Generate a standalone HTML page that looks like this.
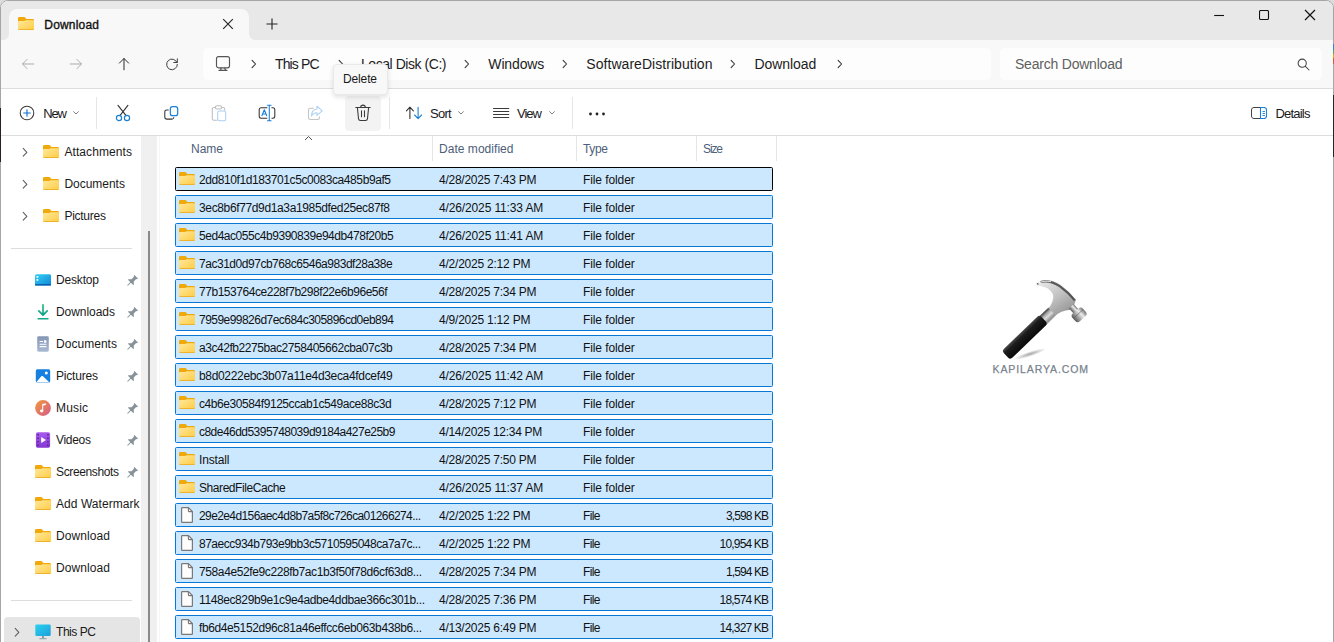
<!DOCTYPE html>
<html lang="en"><head><meta charset="utf-8"><title>Download</title>
<style>
html,body{margin:0;padding:0;}
body{width:1334px;height:642px;overflow:hidden;background:#fff;position:relative;font-family:"Liberation Sans",sans-serif;}
.a{position:absolute;display:block;}
.t{position:absolute;white-space:nowrap;line-height:1;}
#w{position:absolute;left:0;top:0;width:1334px;height:642px;overflow:hidden;}
</style></head><body><div id="w">
<div class="a" style="left:0px;top:0px;width:1334px;height:642px;background:#dcdcdc;"></div>
<div class="a" style="left:0px;top:0px;width:1334px;height:660px;background:#fff;border:1px solid #a6a6a6;border-radius:8px 8px 0 0;box-sizing:border-box;"></div>
<div class="a" style="left:1px;top:1px;width:1332px;height:39px;background:#e8e8e8;border-radius:7px 7px 0 0;"></div>
<div class="a" style="left:1px;top:40px;width:1332px;height:48px;background:#f8f8f8;"></div>
<div class="a" style="left:1px;top:88px;width:1332px;height:1px;background:#dddddd;"></div>
<div class="a" style="left:9px;top:9px;width:240px;height:31px;background:#f8f8f8;border-radius:8px 8px 0 0;"></div>
<svg class="a" style="left:3px;top:34px;" width="6" height="6" viewBox="0 0 6 6"><path d="M6 0 V6 H0 A6 6 0 0 0 6 0Z" fill="#f8f8f8"/></svg>
<svg class="a" style="left:249px;top:34px;" width="6" height="6" viewBox="0 0 6 6"><path d="M0 0 V6 H6 A6 6 0 0 1 0 0Z" fill="#f8f8f8"/></svg>
<div class="a" style="left:1333px;top:44px;width:1px;height:6px;background:#2f86d6;"></div>
<div class="a" style="left:1333px;top:50px;width:1px;height:4px;background:#4aa86a;"></div>
<div class="a" style="left:1333px;top:54px;width:1px;height:4px;background:#c9b21a;"></div>
<div class="a" style="left:1333px;top:58px;width:1px;height:6px;background:#cf5a45;"></div>
<div class="a" style="left:1333px;top:95px;width:1px;height:62px;background:#2a2424;"></div>
<div class="a" style="left:0px;top:108px;width:1px;height:54px;background:#2a2020;"></div>
<svg class="a" style="left:18px;top:17px;" width="16" height="13" viewBox="0 0 16 13"><defs><linearGradient id="fg1" x1="0" y1="0" x2="1" y2="1"><stop offset="0" stop-color="#ffe79c"/><stop offset="1" stop-color="#ffcd45"/></linearGradient></defs>
<path d="M1.300 0H6C6.600 0 7 .2 7.400 .7L8.300 2H14.700C15.400 2 16 2.600 16 3.300V6H0V1.300C0 .6 .6 0 1.300 0Z" fill="#f0a90a"/>
<path d="M0 4.900C0 4.400 .4 4 .9 4H6.200C6.700 4 7 3.900 7.300 3.600L7.500 3.400C7.700 3.250 7.900 3.200 8.200 3.200H15C15.600 3.200 16 3.600 16 4.200V11.800C16 12.500 15.500 13 14.800 13H1.200C.5 13 0 12.500 0 11.800Z" fill="url(#fg1)"/>
<path d="M0 11.500V11.800C0 12.500 .5 13 1.200 13H14.800C15.500 13 16 12.500 16 11.800V11.500C16 12 15.500 12.300 14.800 12.300H1.200C.5 12.300 0 12 0 11.500Z" fill="#eaa81c"/></svg>
<span class="t" style="top:18.84px;font-size:12px;letter-spacing:0.190px;color:#111;-webkit-text-stroke:0.35px #111;left:44.30px;">Download</span>
<svg class="a" style="left:222px;top:18px;" width="12" height="12" viewBox="0 0 12 12"><path d="M1.2 1.2 L10.800 10.800 M10.800 1.2 L1.2 10.800" stroke="#222" stroke-width="1.1" fill="none"/></svg>
<svg class="a" style="left:265.5px;top:18px;" width="12" height="12" viewBox="0 0 12 12"><path d="M6 .5V11.500M.5 6H11.500" stroke="#222" stroke-width="1.1" fill="none"/></svg>
<svg class="a" style="left:1213px;top:10px;" width="12" height="12" viewBox="0 0 12 12"><path d="M1.200 5.500H11" stroke="#111" stroke-width="1.100"/></svg>
<svg class="a" style="left:1259px;top:10px;" width="12" height="12" viewBox="0 0 12 12"><rect x=".5" y=".5" width="9" height="9" rx="1.300" fill="none" stroke="#111" stroke-width="1.100"/></svg>
<svg class="a" style="left:1304px;top:9px;" width="12" height="12" viewBox="0 0 12 12"><path d="M1 1L11 11M11 1L1 11" stroke="#111" stroke-width="1.2" fill="none"/></svg>
<svg class="a" style="left:20px;top:55.5px;" width="16" height="16" viewBox="0 0 16 16"><g transform="rotate(0 8 8) translate(8 8) scale(.89) translate(-8 -8)"><path d="M14.500 8H2M7 2.800L1.800 8L7 13.200" stroke="#a6a6a6" stroke-width="1.050" fill="none" stroke-linecap="round" stroke-linejoin="round"/></g></svg>
<svg class="a" style="left:68px;top:55.5px;" width="16" height="16" viewBox="0 0 16 16"><g transform="rotate(180 8 8) translate(8 8) scale(.89) translate(-8 -8)"><path d="M14.500 8H2M7 2.800L1.800 8L7 13.200" stroke="#a6a6a6" stroke-width="1.050" fill="none" stroke-linecap="round" stroke-linejoin="round"/></g></svg>
<svg class="a" style="left:115.5px;top:55.7px;" width="16" height="16" viewBox="0 0 16 16"><g transform="rotate(90 8 8) translate(8 8) scale(.89) translate(-8 -8)"><path d="M14.500 8H2M7 2.800L1.800 8L7 13.200" stroke="#1f1f1f" stroke-width="1.050" fill="none" stroke-linecap="round" stroke-linejoin="round"/></g></svg>
<svg class="a" style="left:164px;top:55.7px;" width="16" height="16" viewBox="0 0 16 16"><g transform="translate(8 8) scale(.89) translate(-8 -8)"><path d="M13.600 6.300A6 6 0 1 0 14 8.500" stroke="#333" stroke-width="1.050" fill="none" stroke-linecap="round"/><path d="M14 2.200V6.300H9.900" stroke="#333" stroke-width="1.050" fill="none" stroke-linecap="round" stroke-linejoin="round"/></g></svg>
<div class="a" style="left:203px;top:48px;width:788px;height:32px;background:#fdfdfd;border-radius:5px;"></div>
<div class="a" style="left:1000px;top:48px;width:322px;height:32px;background:#fdfdfd;border-radius:5px;"></div>
<svg class="a" style="left:215px;top:56px;" width="16" height="16" viewBox="0 0 16 16"><rect x="1.500" y=".6" width="13" height="11.200" rx="2" fill="none" stroke="#555" stroke-width="1.150"/><path d="M6.200 12L5.600 14.200M9.800 12L10.400 14.200M4 14.300H12" stroke="#555" stroke-width="1.200" fill="none" stroke-linecap="round"/></svg>
<svg class="a" style="left:249.5px;top:58.1px;" width="8" height="12" viewBox="0 0 8 12"><path d="M2.100 2.300L5.600 6L2.100 9.700" stroke="#333" stroke-width="1.050" fill="none" stroke-linecap="round" stroke-linejoin="round"/></svg>
<svg class="a" style="left:337px;top:58.1px;" width="8" height="12" viewBox="0 0 8 12"><path d="M2.100 2.300L5.600 6L2.100 9.700" stroke="#333" stroke-width="1.050" fill="none" stroke-linecap="round" stroke-linejoin="round"/></svg>
<svg class="a" style="left:463px;top:58.1px;" width="8" height="12" viewBox="0 0 8 12"><path d="M2.100 2.300L5.600 6L2.100 9.700" stroke="#333" stroke-width="1.050" fill="none" stroke-linecap="round" stroke-linejoin="round"/></svg>
<svg class="a" style="left:561px;top:58.1px;" width="8" height="12" viewBox="0 0 8 12"><path d="M2.100 2.300L5.600 6L2.100 9.700" stroke="#333" stroke-width="1.050" fill="none" stroke-linecap="round" stroke-linejoin="round"/></svg>
<svg class="a" style="left:729px;top:58.1px;" width="8" height="12" viewBox="0 0 8 12"><path d="M2.100 2.300L5.600 6L2.100 9.700" stroke="#333" stroke-width="1.050" fill="none" stroke-linecap="round" stroke-linejoin="round"/></svg>
<svg class="a" style="left:835.5px;top:58.1px;" width="8" height="12" viewBox="0 0 8 12"><path d="M2.100 2.300L5.600 6L2.100 9.700" stroke="#333" stroke-width="1.050" fill="none" stroke-linecap="round" stroke-linejoin="round"/></svg>
<span class="t" style="top:57.15px;font-size:14px;letter-spacing:-0.881px;color:#1c1c1c;left:275.00px;">This PC</span>
<span class="t" style="top:57.15px;font-size:14px;letter-spacing:-0.450px;color:#1c1c1c;left:361.00px;">Local Disk (C:)</span>
<span class="t" style="top:57.15px;font-size:14px;letter-spacing:-0.132px;color:#1c1c1c;left:488.30px;">Windows</span>
<span class="t" style="top:57.15px;font-size:14px;letter-spacing:0.048px;color:#1c1c1c;left:586.30px;">SoftwareDistribution</span>
<span class="t" style="top:57.15px;font-size:14px;letter-spacing:-0.066px;color:#1c1c1c;left:754.50px;">Download</span>
<span class="t" style="top:57.15px;font-size:14px;letter-spacing:-0.215px;color:#5f5f5f;left:1015.00px;">Search Download</span>
<svg class="a" style="left:1297px;top:58px;" width="13" height="13" viewBox="0 0 13 13"><circle cx="5.200" cy="5.200" r="4.100" fill="none" stroke="#444" stroke-width="1.050"/><path d="M8.200 8.200L12 12" stroke="#444" stroke-width="1.050" stroke-linecap="round"/></svg>
<div class="a" style="left:1px;top:135px;width:1332px;height:1px;background:#dcdcdc;"></div>
<div class="a" style="left:96px;top:97px;width:1px;height:32px;background:#e6e6e6;"></div>
<div class="a" style="left:389px;top:97px;width:1px;height:32px;background:#e6e6e6;"></div>
<div class="a" style="left:572px;top:97px;width:1px;height:32px;background:#e6e6e6;"></div>
<svg class="a" style="left:18.5px;top:104.5px;" width="16" height="16" viewBox="0 0 16 16"><circle cx="8" cy="8" r="6.800" fill="none" stroke="#3a3a3a" stroke-width="1.050"/><path d="M8 4.700V11.300M4.700 8H11.300" stroke="#0a6fd0" stroke-width="1.100" stroke-linecap="round"/></svg>
<span class="t" style="top:107.00px;font-size:13px;letter-spacing:-1.254px;color:#1a1a1a;left:43.30px;">New</span>
<svg class="a" style="left:72px;top:110.2px;" width="8" height="6" viewBox="0 0 8 6"><path d="M1.600 1.700L4 4L6.400 1.700" stroke="#777" stroke-width=".95" fill="none" stroke-linecap="round" stroke-linejoin="round"/></svg>
<svg class="a" style="left:114px;top:104px;" width="18" height="18" viewBox="0 0 18 18"><path d="M4 1.400L12.100 11.700M13.900 1.400L5.900 11.700" stroke="#333" stroke-width="1.100" fill="none" stroke-linecap="round"/><circle cx="5" cy="14" r="2.600" fill="none" stroke="#1a7fd6" stroke-width="1.200"/><circle cx="13" cy="14" r="2.600" fill="none" stroke="#1a7fd6" stroke-width="1.200"/></svg>
<svg class="a" style="left:162px;top:104px;" width="18" height="18" viewBox="0 0 18 18"><path d="M6.300 5.900H5C3.600 5.900 2.800 6.700 2.800 8.100V13C2.800 14.400 3.600 15.100 5 15.100H9.800C10.900 15.100 11.600 14.500 11.800 13.500" stroke="#333" stroke-width="1.050" fill="none" stroke-linecap="round"/><rect x="8.300" y="2.700" width="7.400" height="9" rx="2.300" fill="none" stroke="#1a7fd6" stroke-width="1.200"/></svg>
<svg class="a" style="left:210px;top:104px;" width="18" height="18" viewBox="0 0 18 18"><path d="M5.500 3.500H4C3 3.500 2.300 4.200 2.300 5.200V14.500C2.300 15.500 3 16.200 4 16.200H7" stroke="#bdbdbd" stroke-width="1.050" fill="none"/><path d="M11.500 3.500H13C14 3.500 14.700 4.200 14.700 5.200V6.500" stroke="#bdbdbd" stroke-width="1.050" fill="none"/><rect x="5.500" y="1.800" width="6" height="3.200" rx="1.200" fill="#fff" stroke="#bdbdbd" stroke-width="1.050"/><rect x="7.700" y="7" width="8" height="9.800" rx="1.800" fill="none" stroke="#a9d0f2" stroke-width="1.050"/></svg>
<svg class="a" style="left:257px;top:104px;" width="20" height="18" viewBox="0 0 20 18"><path d="M10.300 3.800H4.200C3 3.800 2.200 4.600 2.200 5.800V12.200C2.200 13.400 3 14.200 4.200 14.200H10.300M14.500 3.800H15.800C17 3.800 17.800 4.600 17.800 5.800V12.200C17.800 13.400 17 14.200 15.800 14.200H14.500" stroke="#333" stroke-width="1.050" fill="none"/><path d="M12.300 1.500V16.500M10.500 1.300H14.100M10.500 16.700H14.100" stroke="#1a7fd6" stroke-width="1.050" fill="none" stroke-linecap="round"/><path d="M4.800 12L7.300 5.800L9.800 12M5.700 10H8.900" stroke="#1a7fd6" stroke-width="1.100" fill="none" stroke-linejoin="round"/></svg>
<svg class="a" style="left:306px;top:104px;" width="18" height="18" viewBox="0 0 18 18"><path d="M7.500 4.200H4.500C3.300 4.200 2.500 5 2.500 6.200V13.500C2.500 14.700 3.300 15.500 4.500 15.500H11.500C12.700 15.500 13.500 14.700 13.500 13.500V12.800" stroke="#c4c4c4" stroke-width="1.050" fill="none" stroke-linecap="round"/><path d="M11 2.200L16.200 6.800L11 11.400V8.800C8.200 8.800 6.500 9.800 5.500 12C5.500 8 7.500 5.200 11 4.900Z" stroke="#a9d0f2" stroke-width="1.050" fill="none" stroke-linejoin="round"/></svg>
<div class="a" style="left:345px;top:96px;width:36px;height:35px;background:#f3f3f3;border-radius:4px;"></div>
<svg class="a" style="left:354px;top:104px;" width="18" height="18" viewBox="0 0 18 18"><path d="M1.800 3.400H16.200M6.700 3.200C6.700 1.900 7.600 1.100 9 1.100C10.400 1.100 11.300 1.900 11.300 3.200" stroke="#3a3a3a" stroke-width="1.050" fill="none" stroke-linecap="round"/><path d="M3.400 3.600L4.500 14.600C4.600 15.700 5.400 16.400 6.400 16.400H11.600C12.600 16.400 13.400 15.700 13.500 14.600L14.600 3.600" stroke="#3a3a3a" stroke-width="1.050" fill="none"/><path d="M7.500 6.800V12.800M10.500 6.800V12.800" stroke="#3a3a3a" stroke-width="1.050" stroke-linecap="round"/></svg>
<svg class="a" style="left:405px;top:105px;" width="18" height="16" viewBox="0 0 18 16"><path d="M4.900 13.500V2.400M1.400 5.800L4.900 2.200L8.400 5.800" stroke="#333" stroke-width="1.100" fill="none" stroke-linecap="round" stroke-linejoin="round"/><path d="M13.100 2.300V13.400M9.600 10L13.100 13.600L16.600 10" stroke="#1a7fd6" stroke-width="1.100" fill="none" stroke-linecap="round" stroke-linejoin="round"/></svg>
<span class="t" style="top:107.00px;font-size:13px;letter-spacing:-0.748px;color:#1a1a1a;left:430.00px;">Sort</span>
<svg class="a" style="left:457px;top:110.2px;" width="8" height="6" viewBox="0 0 8 6"><path d="M1.600 1.700L4 4L6.400 1.700" stroke="#777" stroke-width=".95" fill="none" stroke-linecap="round" stroke-linejoin="round"/></svg>
<svg class="a" style="left:492px;top:106px;" width="18" height="14" viewBox="0 0 18 14"><path d="M1.500 2.500H16.800M1.500 5.500H16.800M1.500 8.500H16.800M1.500 11.500H16.800" stroke="#3a3a3a" stroke-width="1" stroke-linecap="round"/></svg>
<span class="t" style="top:107.00px;font-size:13px;letter-spacing:-1.048px;color:#1a1a1a;left:517.00px;">View</span>
<svg class="a" style="left:547.8px;top:110.2px;" width="8" height="6" viewBox="0 0 8 6"><path d="M1.600 1.700L4 4L6.400 1.700" stroke="#777" stroke-width=".95" fill="none" stroke-linecap="round" stroke-linejoin="round"/></svg>
<svg class="a" style="left:588.2px;top:110.7px;" width="18" height="6" viewBox="0 0 18 6"><circle cx="2.500" cy="3" r="1.400" fill="#222"/><circle cx="9" cy="3" r="1.400" fill="#222"/><circle cx="15.500" cy="3" r="1.400" fill="#222"/></svg>
<svg class="a" style="left:1251px;top:107px;" width="16" height="12" viewBox="0 0 16 12"><path d="M9.500 .5H3C1.500 .5 .5 1.500 .5 3V9C.5 10.500 1.500 11.500 3 11.500H9.500" fill="none" stroke="#444" stroke-width="1"/><path d="M9.500 .5H13C14.500 .5 15.500 1.500 15.500 3V9C15.500 10.500 14.500 11.500 13 11.500H9.500Z" fill="none" stroke="#1a7fd6" stroke-width="1.100"/><path d="M11.500 4.500H14M11.500 6.500H14M11.500 8.500H14" stroke="#1a7fd6" stroke-width=".9" /></svg>
<span class="t" style="top:107.00px;font-size:13px;letter-spacing:-0.790px;color:#1a1a1a;left:1275.40px;">Details</span>
<div class="a" style="left:333px;top:63.5px;width:54.5px;height:31px;background:#f8f8f8;border:1px solid #e9e9e9;border-radius:4px;box-sizing:border-box;box-shadow:0 2px 5px rgba(0,0,0,.12);"></div>
<span class="t" style="top:72.84px;font-size:12px;letter-spacing:-0.138px;color:#1a1a1a;left:343.00px;">Delete</span>
<div class="a" style="left:141px;top:136px;width:16px;height:520px;background:#f0f0f0;"></div>
<div class="a" style="left:148px;top:231px;width:2px;height:420px;background:#8a8a8a;"></div>
<div class="a" style="left:159px;top:136px;width:1px;height:520px;background:#f6f6f6;"></div>
<svg class="a" style="left:21.3px;top:146px;" width="8.4" height="12.6" viewBox="0 0 8 12"><path d="M2.100 2.300L5.600 6L2.100 9.700" stroke="#606060" stroke-width="1.050" fill="none" stroke-linecap="round" stroke-linejoin="round"/></svg>
<svg class="a" style="left:43px;top:145px;" width="16" height="13" viewBox="0 0 16 13"><defs><linearGradient id="fg2" x1="0" y1="0" x2="1" y2="1"><stop offset="0" stop-color="#ffe79c"/><stop offset="1" stop-color="#ffcd45"/></linearGradient></defs>
<path d="M1.300 0H6C6.600 0 7 .2 7.400 .7L8.300 2H14.700C15.400 2 16 2.600 16 3.300V6H0V1.300C0 .6 .6 0 1.300 0Z" fill="#f0a90a"/>
<path d="M0 4.900C0 4.400 .4 4 .9 4H6.200C6.700 4 7 3.900 7.300 3.600L7.500 3.400C7.700 3.250 7.900 3.200 8.200 3.200H15C15.600 3.200 16 3.600 16 4.200V11.800C16 12.500 15.500 13 14.800 13H1.200C.5 13 0 12.500 0 11.800Z" fill="url(#fg2)"/>
<path d="M0 11.500V11.800C0 12.500 .5 13 1.200 13H14.800C15.500 13 16 12.500 16 11.800V11.500C16 12 15.500 12.300 14.800 12.300H1.200C.5 12.300 0 12 0 11.500Z" fill="#eaa81c"/></svg>
<span class="t" style="top:145.84px;font-size:12px;letter-spacing:0.090px;color:#1a1a1a;left:64.40px;">Attachments</span>
<svg class="a" style="left:21.3px;top:178px;" width="8.4" height="12.6" viewBox="0 0 8 12"><path d="M2.100 2.300L5.600 6L2.100 9.700" stroke="#606060" stroke-width="1.050" fill="none" stroke-linecap="round" stroke-linejoin="round"/></svg>
<svg class="a" style="left:43px;top:177px;" width="16" height="13" viewBox="0 0 16 13"><defs><linearGradient id="fg3" x1="0" y1="0" x2="1" y2="1"><stop offset="0" stop-color="#ffe79c"/><stop offset="1" stop-color="#ffcd45"/></linearGradient></defs>
<path d="M1.300 0H6C6.600 0 7 .2 7.400 .7L8.300 2H14.700C15.400 2 16 2.600 16 3.300V6H0V1.300C0 .6 .6 0 1.300 0Z" fill="#f0a90a"/>
<path d="M0 4.900C0 4.400 .4 4 .9 4H6.200C6.700 4 7 3.900 7.300 3.600L7.500 3.400C7.700 3.250 7.900 3.200 8.200 3.200H15C15.600 3.200 16 3.600 16 4.200V11.800C16 12.500 15.500 13 14.800 13H1.200C.5 13 0 12.500 0 11.800Z" fill="url(#fg3)"/>
<path d="M0 11.500V11.800C0 12.500 .5 13 1.200 13H14.800C15.500 13 16 12.500 16 11.800V11.500C16 12 15.500 12.300 14.800 12.300H1.200C.5 12.300 0 12 0 11.500Z" fill="#eaa81c"/></svg>
<span class="t" style="top:177.84px;font-size:12px;letter-spacing:-0.024px;color:#1a1a1a;left:64.40px;">Documents</span>
<svg class="a" style="left:21.3px;top:210px;" width="8.4" height="12.6" viewBox="0 0 8 12"><path d="M2.100 2.300L5.600 6L2.100 9.700" stroke="#606060" stroke-width="1.050" fill="none" stroke-linecap="round" stroke-linejoin="round"/></svg>
<svg class="a" style="left:43px;top:209px;" width="16" height="13" viewBox="0 0 16 13"><defs><linearGradient id="fg4" x1="0" y1="0" x2="1" y2="1"><stop offset="0" stop-color="#ffe79c"/><stop offset="1" stop-color="#ffcd45"/></linearGradient></defs>
<path d="M1.300 0H6C6.600 0 7 .2 7.400 .7L8.300 2H14.700C15.400 2 16 2.600 16 3.300V6H0V1.300C0 .6 .6 0 1.300 0Z" fill="#f0a90a"/>
<path d="M0 4.900C0 4.400 .4 4 .9 4H6.200C6.700 4 7 3.900 7.300 3.600L7.500 3.400C7.700 3.250 7.900 3.200 8.200 3.200H15C15.600 3.200 16 3.600 16 4.200V11.800C16 12.500 15.500 13 14.800 13H1.200C.5 13 0 12.500 0 11.800Z" fill="url(#fg4)"/>
<path d="M0 11.500V11.800C0 12.500 .5 13 1.200 13H14.800C15.500 13 16 12.500 16 11.800V11.500C16 12 15.500 12.300 14.800 12.300H1.200C.5 12.300 0 12 0 11.500Z" fill="#eaa81c"/></svg>
<span class="t" style="top:209.84px;font-size:12px;letter-spacing:-0.264px;color:#1a1a1a;left:64.40px;">Pictures</span>
<div class="a" style="left:11px;top:248px;width:121px;height:1px;background:#dcdcdc;"></div>
<div class="a" style="left:11px;top:600px;width:121px;height:1px;background:#dcdcdc;"></div>
<div class="a" style="left:4px;top:617px;width:136px;height:30px;background:#e5e5e5;border-radius:4px;"></div>
<svg class="a" style="left:13.3px;top:625.7px;" width="8.4" height="12.6" viewBox="0 0 8 12"><path d="M2.100 2.300L5.600 6L2.100 9.700" stroke="#606060" stroke-width="1.050" fill="none" stroke-linecap="round" stroke-linejoin="round"/></svg>
<svg class="a" style="left:35px;top:624px;" width="16" height="16" viewBox="0 0 16 16"><defs><linearGradient id="pcg" x1="0" y1="0" x2="1" y2="1"><stop offset="0" stop-color="#2bd0ee"/><stop offset="1" stop-color="#1aa0dc"/></linearGradient></defs><rect x=".3" y=".5" width="15.400" height="11.500" rx="1.300" fill="url(#pcg)"/><rect x="7" y="12" width="2" height="2.300" fill="#8a9aa5"/><rect x="4.300" y="14" width="7.400" height="1.200" rx=".5" fill="#9aa8b2"/></svg>
<span class="t" style="top:625.84px;font-size:12px;letter-spacing:-0.446px;color:#1a1a1a;left:56.00px;">This PC</span>
<svg class="a" style="left:35px;top:272px;" width="16" height="16" viewBox="0 0 16 16"><defs><linearGradient id="dk" x1="0" y1="0" x2="1" y2="1"><stop offset="0" stop-color="#35d2f2"/><stop offset="1" stop-color="#0f86d8"/></linearGradient></defs><rect x="0" y="2.200" width="16" height="11.300" rx="1.500" fill="url(#dk)"/><rect x="1.500" y="4" width="1.800" height="1.800" fill="#e8fbff"/><rect x="1.500" y="7" width="1.800" height="1.800" fill="#e8fbff"/><rect x="0" y="12" width="16" height="1.500" fill="#0c5fb0"/></svg>
<span class="t" style="top:273.84px;font-size:12px;letter-spacing:-0.170px;color:#1a1a1a;left:56.00px;">Desktop</span>
<svg class="a" style="left:125.6px;top:274.7px;overflow:visible;" width="12" height="12" viewBox="0 0 12 12"><g transform="translate(6 6) scale(1.130) translate(-6 -6) rotate(45 6 6)"><path d="M3.800 .8H8.200V1.600L7.400 2.200V5.200L9.300 7V7.800H6.400V11.300L6 12L5.600 11.300V7.800H2.700V7L4.600 5.200V2.200L3.800 1.600Z" fill="#87919a"/></g></svg>
<svg class="a" style="left:35px;top:304px;" width="16" height="16" viewBox="0 0 16 16"><defs><linearGradient id="dlg" x1="0" y1="0" x2="0" y2="1"><stop offset="0" stop-color="#25c27e"/><stop offset="1" stop-color="#0f9f8a"/></linearGradient></defs><path d="M8 .8V11M3.800 6.900L8 11.100L12.200 6.900" stroke="url(#dlg)" stroke-width="1.700" fill="none" stroke-linecap="round" stroke-linejoin="round"/><rect x="2.300" y="14" width="11.400" height="1.600" rx=".8" fill="#16a888"/></svg>
<span class="t" style="top:305.84px;font-size:12px;letter-spacing:-0.046px;color:#1a1a1a;left:56.00px;">Downloads</span>
<svg class="a" style="left:125.6px;top:306.7px;overflow:visible;" width="12" height="12" viewBox="0 0 12 12"><g transform="translate(6 6) scale(1.130) translate(-6 -6) rotate(45 6 6)"><path d="M3.800 .8H8.200V1.600L7.400 2.200V5.200L9.300 7V7.800H6.400V11.300L6 12L5.600 11.300V7.800H2.700V7L4.600 5.200V2.200L3.800 1.600Z" fill="#87919a"/></g></svg>
<svg class="a" style="left:35px;top:336px;" width="16" height="16" viewBox="0 0 16 16"><defs><linearGradient id="dcg" x1="0" y1="0" x2="0" y2="1"><stop offset="0" stop-color="#8496b4"/><stop offset="1" stop-color="#a9b9d3"/></linearGradient></defs><rect x="2.200" y=".3" width="11.600" height="15.400" rx="1.400" fill="url(#dcg)"/><path d="M4.600 5.500H8M4.600 8.300H11.400M4.600 10.600H11.400" stroke="#fff" stroke-width="1.100"/><rect x="9" y="4.300" width="2.400" height="2.400" fill="#fff"/></svg>
<span class="t" style="top:337.84px;font-size:12px;letter-spacing:0.038px;color:#1a1a1a;left:56.00px;">Documents</span>
<svg class="a" style="left:125.6px;top:338.7px;overflow:visible;" width="12" height="12" viewBox="0 0 12 12"><g transform="translate(6 6) scale(1.130) translate(-6 -6) rotate(45 6 6)"><path d="M3.800 .8H8.200V1.600L7.400 2.200V5.200L9.300 7V7.800H6.400V11.300L6 12L5.600 11.300V7.800H2.700V7L4.600 5.200V2.200L3.800 1.600Z" fill="#87919a"/></g></svg>
<svg class="a" style="left:35px;top:368px;" width="16" height="16" viewBox="0 0 16 16"><rect x=".8" y="1.300" width="14.400" height="13.400" rx="1.600" fill="#1580e0"/><path d="M1.500 14L6.300 8.300C6.800 7.800 7.500 7.800 8 8.300L14.500 14.400H2C1.700 14.400 1.500 14.200 1.500 14Z" fill="#fff"/><circle cx="11.300" cy="5" r="1.500" fill="#fff"/></svg>
<span class="t" style="top:369.84px;font-size:12px;letter-spacing:-0.193px;color:#1a1a1a;left:56.00px;">Pictures</span>
<svg class="a" style="left:125.6px;top:370.7px;overflow:visible;" width="12" height="12" viewBox="0 0 12 12"><g transform="translate(6 6) scale(1.130) translate(-6 -6) rotate(45 6 6)"><path d="M3.800 .8H8.200V1.600L7.400 2.200V5.200L9.300 7V7.800H6.400V11.300L6 12L5.600 11.300V7.800H2.700V7L4.600 5.200V2.200L3.800 1.600Z" fill="#87919a"/></g></svg>
<svg class="a" style="left:35px;top:400px;" width="16" height="16" viewBox="0 0 16 16"><defs><linearGradient id="mu" x1="0" y1="0" x2="1" y2="1"><stop offset="0" stop-color="#f09a3c"/><stop offset="1" stop-color="#d65a8a"/></linearGradient></defs><circle cx="8" cy="8" r="7.900" fill="url(#mu)"/><path d="M7.200 11V4L10.800 3.200V5L8.200 5.600V11Z" fill="#fff"/><ellipse cx="6.700" cy="11" rx="1.700" ry="1.400" fill="#fff"/></svg>
<span class="t" style="top:401.84px;font-size:12px;letter-spacing:0.166px;color:#1a1a1a;left:56.00px;">Music</span>
<svg class="a" style="left:125.6px;top:402.7px;overflow:visible;" width="12" height="12" viewBox="0 0 12 12"><g transform="translate(6 6) scale(1.130) translate(-6 -6) rotate(45 6 6)"><path d="M3.800 .8H8.200V1.600L7.400 2.200V5.200L9.300 7V7.800H6.400V11.300L6 12L5.600 11.300V7.800H2.700V7L4.600 5.200V2.200L3.800 1.600Z" fill="#87919a"/></g></svg>
<svg class="a" style="left:35px;top:432px;" width="16" height="16" viewBox="0 0 16 16"><defs><linearGradient id="vg" x1="0" y1="0" x2="0" y2="1"><stop offset="0" stop-color="#a85cec"/><stop offset="1" stop-color="#8636d4"/></linearGradient></defs><rect x=".9" y=".3" width="14.200" height="15.400" rx="1.700" fill="url(#vg)"/><path d="M6.200 5L11 8L6.200 11Z" fill="#fff"/><path d="M2.300 2.800H3.900M2.300 6.300H3.900M2.300 9.800H3.900M2.300 13.300H3.900M12.100 2.800H13.700M12.100 6.300H13.700M12.100 9.800H13.700M12.100 13.300H13.700" stroke="#55288f" stroke-width="1.500"/></svg>
<span class="t" style="top:433.84px;font-size:12px;letter-spacing:-0.295px;color:#1a1a1a;left:56.00px;">Videos</span>
<svg class="a" style="left:125.6px;top:434.7px;overflow:visible;" width="12" height="12" viewBox="0 0 12 12"><g transform="translate(6 6) scale(1.130) translate(-6 -6) rotate(45 6 6)"><path d="M3.800 .8H8.200V1.600L7.400 2.200V5.200L9.300 7V7.800H6.400V11.300L6 12L5.600 11.300V7.800H2.700V7L4.600 5.200V2.200L3.800 1.600Z" fill="#87919a"/></g></svg>
<svg class="a" style="left:35px;top:465px;" width="16" height="13" viewBox="0 0 16 13"><defs><linearGradient id="fg5" x1="0" y1="0" x2="1" y2="1"><stop offset="0" stop-color="#ffe79c"/><stop offset="1" stop-color="#ffcd45"/></linearGradient></defs>
<path d="M1.300 0H6C6.600 0 7 .2 7.400 .7L8.300 2H14.700C15.400 2 16 2.600 16 3.300V6H0V1.300C0 .6 .6 0 1.300 0Z" fill="#f0a90a"/>
<path d="M0 4.900C0 4.400 .4 4 .9 4H6.200C6.700 4 7 3.900 7.300 3.600L7.500 3.400C7.700 3.250 7.900 3.200 8.200 3.200H15C15.600 3.200 16 3.600 16 4.200V11.800C16 12.500 15.500 13 14.800 13H1.200C.5 13 0 12.500 0 11.800Z" fill="url(#fg5)"/>
<path d="M0 11.500V11.800C0 12.500 .5 13 1.200 13H14.800C15.500 13 16 12.500 16 11.800V11.500C16 12 15.500 12.300 14.800 12.300H1.200C.5 12.300 0 12 0 11.500Z" fill="#eaa81c"/></svg>
<span class="t" style="top:465.84px;font-size:12px;letter-spacing:-0.370px;color:#1a1a1a;left:56.00px;">Screenshots</span>
<svg class="a" style="left:125.6px;top:466.7px;overflow:visible;" width="12" height="12" viewBox="0 0 12 12"><g transform="translate(6 6) scale(1.130) translate(-6 -6) rotate(45 6 6)"><path d="M3.800 .8H8.200V1.600L7.400 2.200V5.200L9.300 7V7.800H6.400V11.300L6 12L5.600 11.300V7.800H2.700V7L4.600 5.200V2.200L3.800 1.600Z" fill="#87919a"/></g></svg>
<svg class="a" style="left:35px;top:497px;" width="16" height="13" viewBox="0 0 16 13"><defs><linearGradient id="fg6" x1="0" y1="0" x2="1" y2="1"><stop offset="0" stop-color="#ffe79c"/><stop offset="1" stop-color="#ffcd45"/></linearGradient></defs>
<path d="M1.300 0H6C6.600 0 7 .2 7.400 .7L8.300 2H14.700C15.400 2 16 2.600 16 3.300V6H0V1.300C0 .6 .6 0 1.300 0Z" fill="#f0a90a"/>
<path d="M0 4.900C0 4.400 .4 4 .9 4H6.200C6.700 4 7 3.900 7.300 3.600L7.500 3.400C7.700 3.250 7.900 3.200 8.200 3.200H15C15.600 3.200 16 3.600 16 4.200V11.800C16 12.500 15.500 13 14.800 13H1.200C.5 13 0 12.500 0 11.800Z" fill="url(#fg6)"/>
<path d="M0 11.500V11.800C0 12.500 .5 13 1.200 13H14.800C15.500 13 16 12.500 16 11.800V11.500C16 12 15.500 12.300 14.800 12.300H1.200C.5 12.300 0 12 0 11.500Z" fill="#eaa81c"/></svg>
<span class="t" style="top:497.84px;font-size:12px;letter-spacing:0.049px;color:#1a1a1a;left:56.00px;">Add Watermark</span>
<svg class="a" style="left:35px;top:529px;" width="16" height="13" viewBox="0 0 16 13"><defs><linearGradient id="fg7" x1="0" y1="0" x2="1" y2="1"><stop offset="0" stop-color="#ffe79c"/><stop offset="1" stop-color="#ffcd45"/></linearGradient></defs>
<path d="M1.300 0H6C6.600 0 7 .2 7.400 .7L8.300 2H14.700C15.400 2 16 2.600 16 3.300V6H0V1.300C0 .6 .6 0 1.300 0Z" fill="#f0a90a"/>
<path d="M0 4.900C0 4.400 .4 4 .9 4H6.200C6.700 4 7 3.900 7.300 3.600L7.500 3.400C7.700 3.250 7.900 3.200 8.200 3.200H15C15.600 3.200 16 3.600 16 4.200V11.800C16 12.500 15.500 13 14.800 13H1.200C.5 13 0 12.500 0 11.800Z" fill="url(#fg7)"/>
<path d="M0 11.500V11.800C0 12.500 .5 13 1.200 13H14.800C15.500 13 16 12.500 16 11.800V11.500C16 12 15.500 12.300 14.800 12.300H1.200C.5 12.300 0 12 0 11.500Z" fill="#eaa81c"/></svg>
<span class="t" style="top:529.84px;font-size:12px;letter-spacing:0.090px;color:#1a1a1a;left:56.00px;">Download</span>
<svg class="a" style="left:35px;top:561px;" width="16" height="13" viewBox="0 0 16 13"><defs><linearGradient id="fg8" x1="0" y1="0" x2="1" y2="1"><stop offset="0" stop-color="#ffe79c"/><stop offset="1" stop-color="#ffcd45"/></linearGradient></defs>
<path d="M1.300 0H6C6.600 0 7 .2 7.400 .7L8.300 2H14.700C15.400 2 16 2.600 16 3.300V6H0V1.300C0 .6 .6 0 1.300 0Z" fill="#f0a90a"/>
<path d="M0 4.900C0 4.400 .4 4 .9 4H6.200C6.700 4 7 3.900 7.300 3.600L7.500 3.400C7.700 3.250 7.900 3.200 8.200 3.200H15C15.600 3.200 16 3.600 16 4.200V11.800C16 12.500 15.500 13 14.800 13H1.200C.5 13 0 12.500 0 11.800Z" fill="url(#fg8)"/>
<path d="M0 11.500V11.800C0 12.500 .5 13 1.200 13H14.800C15.500 13 16 12.500 16 11.800V11.500C16 12 15.500 12.300 14.800 12.300H1.200C.5 12.300 0 12 0 11.500Z" fill="#eaa81c"/></svg>
<span class="t" style="top:561.84px;font-size:12px;letter-spacing:0.090px;color:#1a1a1a;left:56.00px;">Download</span>
<div class="a" style="left:432px;top:136px;width:1px;height:25px;background:#e5e5e5;"></div>
<div class="a" style="left:576px;top:136px;width:1px;height:25px;background:#e5e5e5;"></div>
<div class="a" style="left:696px;top:136px;width:1px;height:25px;background:#e5e5e5;"></div>
<div class="a" style="left:776px;top:136px;width:1px;height:25px;background:#e5e5e5;"></div>
<span class="t" style="top:142.84px;font-size:12px;letter-spacing:-0.004px;color:#4c607a;left:191.00px;">Name</span>
<span class="t" style="top:142.84px;font-size:12px;letter-spacing:0.038px;color:#4c607a;left:439.00px;">Date modified</span>
<span class="t" style="top:142.84px;font-size:12px;letter-spacing:-0.339px;color:#4c607a;left:583.00px;">Type</span>
<span class="t" style="top:142.84px;font-size:12px;letter-spacing:-1.115px;color:#4c607a;left:703.00px;">Size</span>
<svg class="a" style="left:304px;top:135px;" width="9" height="6" viewBox="0 0 9 6"><path d="M1 5L4.500 1.500L8 5" stroke="#555" stroke-width="1" fill="none"/></svg>
<div class="a" style="left:175px;top:167px;width:598px;height:24px;background:#cce8ff;border:1px solid #050505;border-radius:1.500px;box-sizing:border-box;"></div>
<svg class="a" style="left:179px;top:172px;" width="16" height="13" viewBox="0 0 16 13"><defs><linearGradient id="fg9" x1="0" y1="0" x2="1" y2="1"><stop offset="0" stop-color="#ffe79c"/><stop offset="1" stop-color="#ffcd45"/></linearGradient></defs>
<path d="M1.300 0H6C6.600 0 7 .2 7.400 .7L8.300 2H14.700C15.400 2 16 2.600 16 3.300V6H0V1.300C0 .6 .6 0 1.300 0Z" fill="#f0a90a"/>
<path d="M0 4.900C0 4.400 .4 4 .9 4H6.200C6.700 4 7 3.900 7.300 3.600L7.500 3.400C7.700 3.250 7.900 3.200 8.200 3.200H15C15.600 3.200 16 3.600 16 4.200V11.800C16 12.500 15.500 13 14.800 13H1.200C.5 13 0 12.500 0 11.800Z" fill="url(#fg9)"/>
<path d="M0 11.500V11.800C0 12.500 .5 13 1.200 13H14.800C15.500 13 16 12.500 16 11.800V11.500C16 12 15.500 12.300 14.800 12.300H1.200C.5 12.300 0 12 0 11.500Z" fill="#eaa81c"/></svg>
<span class="t" style="top:173.84px;font-size:12px;letter-spacing:-0.415px;color:#111;left:199.00px;">2dd810f1d183701c5c0083ca485b9af5</span>
<span class="t" style="top:173.84px;font-size:12px;letter-spacing:-0.251px;color:#111;left:439.00px;">4/28/2025 7:43 PM</span>
<span class="t" style="top:173.84px;font-size:12px;letter-spacing:-0.099px;color:#111;left:583.00px;">File folder</span>
<div class="a" style="left:175px;top:195px;width:598px;height:24px;background:#cce8ff;border:1px solid #0878d4;border-radius:1.500px;box-sizing:border-box;"></div>
<svg class="a" style="left:179px;top:200px;" width="16" height="13" viewBox="0 0 16 13"><defs><linearGradient id="fg10" x1="0" y1="0" x2="1" y2="1"><stop offset="0" stop-color="#ffe79c"/><stop offset="1" stop-color="#ffcd45"/></linearGradient></defs>
<path d="M1.300 0H6C6.600 0 7 .2 7.400 .7L8.300 2H14.700C15.400 2 16 2.600 16 3.300V6H0V1.300C0 .6 .6 0 1.300 0Z" fill="#f0a90a"/>
<path d="M0 4.900C0 4.400 .4 4 .9 4H6.200C6.700 4 7 3.900 7.300 3.600L7.500 3.400C7.700 3.250 7.900 3.200 8.200 3.200H15C15.600 3.200 16 3.600 16 4.200V11.800C16 12.500 15.500 13 14.800 13H1.200C.5 13 0 12.500 0 11.800Z" fill="url(#fg10)"/>
<path d="M0 11.500V11.800C0 12.500 .5 13 1.200 13H14.800C15.500 13 16 12.500 16 11.800V11.500C16 12 15.500 12.300 14.800 12.300H1.200C.5 12.300 0 12 0 11.500Z" fill="#eaa81c"/></svg>
<span class="t" style="top:201.84px;font-size:12px;letter-spacing:-0.361px;color:#111;left:199.00px;">3ec8b6f77d9d1a3a1985dfed25ec87f8</span>
<span class="t" style="top:201.84px;font-size:12px;letter-spacing:-0.131px;color:#111;left:439.00px;">4/26/2025 11:33 AM</span>
<span class="t" style="top:201.84px;font-size:12px;letter-spacing:-0.099px;color:#111;left:583.00px;">File folder</span>
<div class="a" style="left:175px;top:223px;width:598px;height:24px;background:#cce8ff;border:1px solid #0878d4;border-radius:1.500px;box-sizing:border-box;"></div>
<svg class="a" style="left:179px;top:228px;" width="16" height="13" viewBox="0 0 16 13"><defs><linearGradient id="fg11" x1="0" y1="0" x2="1" y2="1"><stop offset="0" stop-color="#ffe79c"/><stop offset="1" stop-color="#ffcd45"/></linearGradient></defs>
<path d="M1.300 0H6C6.600 0 7 .2 7.400 .7L8.300 2H14.700C15.400 2 16 2.600 16 3.300V6H0V1.300C0 .6 .6 0 1.300 0Z" fill="#f0a90a"/>
<path d="M0 4.900C0 4.400 .4 4 .9 4H6.200C6.700 4 7 3.900 7.300 3.600L7.500 3.400C7.700 3.250 7.900 3.200 8.200 3.200H15C15.600 3.200 16 3.600 16 4.200V11.800C16 12.500 15.500 13 14.800 13H1.200C.5 13 0 12.500 0 11.800Z" fill="url(#fg11)"/>
<path d="M0 11.500V11.800C0 12.500 .5 13 1.200 13H14.800C15.500 13 16 12.500 16 11.800V11.500C16 12 15.500 12.300 14.800 12.300H1.200C.5 12.300 0 12 0 11.500Z" fill="#eaa81c"/></svg>
<span class="t" style="top:229.84px;font-size:12px;letter-spacing:-0.461px;color:#111;left:199.00px;">5ed4ac055c4b9390839e94db478f20b5</span>
<span class="t" style="top:229.84px;font-size:12px;letter-spacing:-0.131px;color:#111;left:439.00px;">4/26/2025 11:41 AM</span>
<span class="t" style="top:229.84px;font-size:12px;letter-spacing:-0.099px;color:#111;left:583.00px;">File folder</span>
<div class="a" style="left:175px;top:251px;width:598px;height:24px;background:#cce8ff;border:1px solid #0878d4;border-radius:1.500px;box-sizing:border-box;"></div>
<svg class="a" style="left:179px;top:256px;" width="16" height="13" viewBox="0 0 16 13"><defs><linearGradient id="fg12" x1="0" y1="0" x2="1" y2="1"><stop offset="0" stop-color="#ffe79c"/><stop offset="1" stop-color="#ffcd45"/></linearGradient></defs>
<path d="M1.300 0H6C6.600 0 7 .2 7.400 .7L8.300 2H14.700C15.400 2 16 2.600 16 3.300V6H0V1.300C0 .6 .6 0 1.300 0Z" fill="#f0a90a"/>
<path d="M0 4.900C0 4.400 .4 4 .9 4H6.200C6.700 4 7 3.900 7.300 3.600L7.500 3.400C7.700 3.250 7.900 3.200 8.200 3.200H15C15.600 3.200 16 3.600 16 4.200V11.800C16 12.500 15.500 13 14.800 13H1.200C.5 13 0 12.500 0 11.800Z" fill="url(#fg12)"/>
<path d="M0 11.500V11.800C0 12.500 .5 13 1.200 13H14.800C15.500 13 16 12.500 16 11.800V11.500C16 12 15.500 12.300 14.800 12.300H1.200C.5 12.300 0 12 0 11.500Z" fill="#eaa81c"/></svg>
<span class="t" style="top:257.84px;font-size:12px;letter-spacing:-0.468px;color:#111;left:199.00px;">7ac31d0d97cb768c6546a983df28a38e</span>
<span class="t" style="top:257.84px;font-size:12px;letter-spacing:-0.222px;color:#111;left:439.00px;">4/2/2025 2:12 PM</span>
<span class="t" style="top:257.84px;font-size:12px;letter-spacing:-0.099px;color:#111;left:583.00px;">File folder</span>
<div class="a" style="left:175px;top:279px;width:598px;height:24px;background:#cce8ff;border:1px solid #0878d4;border-radius:1.500px;box-sizing:border-box;"></div>
<svg class="a" style="left:179px;top:284px;" width="16" height="13" viewBox="0 0 16 13"><defs><linearGradient id="fg13" x1="0" y1="0" x2="1" y2="1"><stop offset="0" stop-color="#ffe79c"/><stop offset="1" stop-color="#ffcd45"/></linearGradient></defs>
<path d="M1.300 0H6C6.600 0 7 .2 7.400 .7L8.300 2H14.700C15.400 2 16 2.600 16 3.300V6H0V1.300C0 .6 .6 0 1.300 0Z" fill="#f0a90a"/>
<path d="M0 4.900C0 4.400 .4 4 .9 4H6.200C6.700 4 7 3.900 7.300 3.600L7.500 3.400C7.700 3.250 7.900 3.200 8.200 3.200H15C15.600 3.200 16 3.600 16 4.200V11.800C16 12.500 15.500 13 14.800 13H1.200C.5 13 0 12.500 0 11.800Z" fill="url(#fg13)"/>
<path d="M0 11.500V11.800C0 12.500 .5 13 1.200 13H14.800C15.500 13 16 12.500 16 11.800V11.500C16 12 15.500 12.300 14.800 12.300H1.200C.5 12.300 0 12 0 11.500Z" fill="#eaa81c"/></svg>
<span class="t" style="top:285.84px;font-size:12px;letter-spacing:-0.460px;color:#111;left:199.00px;">77b153764ce228f7b298f22e6b96e56f</span>
<span class="t" style="top:285.84px;font-size:12px;letter-spacing:-0.251px;color:#111;left:439.00px;">4/28/2025 7:34 PM</span>
<span class="t" style="top:285.84px;font-size:12px;letter-spacing:-0.099px;color:#111;left:583.00px;">File folder</span>
<div class="a" style="left:175px;top:307px;width:598px;height:24px;background:#cce8ff;border:1px solid #0878d4;border-radius:1.500px;box-sizing:border-box;"></div>
<svg class="a" style="left:179px;top:312px;" width="16" height="13" viewBox="0 0 16 13"><defs><linearGradient id="fg14" x1="0" y1="0" x2="1" y2="1"><stop offset="0" stop-color="#ffe79c"/><stop offset="1" stop-color="#ffcd45"/></linearGradient></defs>
<path d="M1.300 0H6C6.600 0 7 .2 7.400 .7L8.300 2H14.700C15.400 2 16 2.600 16 3.300V6H0V1.300C0 .6 .6 0 1.300 0Z" fill="#f0a90a"/>
<path d="M0 4.900C0 4.400 .4 4 .9 4H6.200C6.700 4 7 3.900 7.300 3.600L7.500 3.400C7.700 3.250 7.900 3.200 8.200 3.200H15C15.600 3.200 16 3.600 16 4.200V11.800C16 12.500 15.500 13 14.800 13H1.200C.5 13 0 12.500 0 11.800Z" fill="url(#fg14)"/>
<path d="M0 11.500V11.800C0 12.500 .5 13 1.200 13H14.800C15.500 13 16 12.500 16 11.800V11.500C16 12 15.500 12.300 14.800 12.300H1.200C.5 12.300 0 12 0 11.500Z" fill="#eaa81c"/></svg>
<span class="t" style="top:313.84px;font-size:12px;letter-spacing:-0.534px;color:#111;left:199.00px;">7959e99826d7ec684c305896cd0eb894</span>
<span class="t" style="top:313.84px;font-size:12px;letter-spacing:-0.222px;color:#111;left:439.00px;">4/9/2025 1:12 PM</span>
<span class="t" style="top:313.84px;font-size:12px;letter-spacing:-0.099px;color:#111;left:583.00px;">File folder</span>
<div class="a" style="left:175px;top:335px;width:598px;height:24px;background:#cce8ff;border:1px solid #0878d4;border-radius:1.500px;box-sizing:border-box;"></div>
<svg class="a" style="left:179px;top:340px;" width="16" height="13" viewBox="0 0 16 13"><defs><linearGradient id="fg15" x1="0" y1="0" x2="1" y2="1"><stop offset="0" stop-color="#ffe79c"/><stop offset="1" stop-color="#ffcd45"/></linearGradient></defs>
<path d="M1.300 0H6C6.600 0 7 .2 7.400 .7L8.300 2H14.700C15.400 2 16 2.600 16 3.300V6H0V1.300C0 .6 .6 0 1.300 0Z" fill="#f0a90a"/>
<path d="M0 4.900C0 4.400 .4 4 .9 4H6.200C6.700 4 7 3.900 7.300 3.600L7.500 3.400C7.700 3.250 7.900 3.200 8.200 3.200H15C15.600 3.200 16 3.600 16 4.200V11.800C16 12.500 15.500 13 14.800 13H1.200C.5 13 0 12.500 0 11.800Z" fill="url(#fg15)"/>
<path d="M0 11.500V11.800C0 12.500 .5 13 1.200 13H14.800C15.500 13 16 12.500 16 11.800V11.500C16 12 15.500 12.300 14.800 12.300H1.200C.5 12.300 0 12 0 11.500Z" fill="#eaa81c"/></svg>
<span class="t" style="top:341.84px;font-size:12px;letter-spacing:-0.446px;color:#111;left:199.00px;">a3c42fb2275bac2758405662cba07c3b</span>
<span class="t" style="top:341.84px;font-size:12px;letter-spacing:-0.251px;color:#111;left:439.00px;">4/28/2025 7:34 PM</span>
<span class="t" style="top:341.84px;font-size:12px;letter-spacing:-0.099px;color:#111;left:583.00px;">File folder</span>
<div class="a" style="left:175px;top:363px;width:598px;height:24px;background:#cce8ff;border:1px solid #0878d4;border-radius:1.500px;box-sizing:border-box;"></div>
<svg class="a" style="left:179px;top:368px;" width="16" height="13" viewBox="0 0 16 13"><defs><linearGradient id="fg16" x1="0" y1="0" x2="1" y2="1"><stop offset="0" stop-color="#ffe79c"/><stop offset="1" stop-color="#ffcd45"/></linearGradient></defs>
<path d="M1.300 0H6C6.600 0 7 .2 7.400 .7L8.300 2H14.700C15.400 2 16 2.600 16 3.300V6H0V1.300C0 .6 .6 0 1.300 0Z" fill="#f0a90a"/>
<path d="M0 4.900C0 4.400 .4 4 .9 4H6.200C6.700 4 7 3.900 7.300 3.600L7.500 3.400C7.700 3.250 7.900 3.200 8.200 3.200H15C15.600 3.200 16 3.600 16 4.200V11.800C16 12.500 15.500 13 14.800 13H1.200C.5 13 0 12.500 0 11.800Z" fill="url(#fg16)"/>
<path d="M0 11.500V11.800C0 12.500 .5 13 1.200 13H14.800C15.500 13 16 12.500 16 11.800V11.500C16 12 15.500 12.300 14.800 12.300H1.200C.5 12.300 0 12 0 11.500Z" fill="#eaa81c"/></svg>
<span class="t" style="top:369.84px;font-size:12px;letter-spacing:-0.332px;color:#111;left:199.00px;">b8d0222ebc3b07a11e4d3eca4fdcef49</span>
<span class="t" style="top:369.84px;font-size:12px;letter-spacing:-0.131px;color:#111;left:439.00px;">4/26/2025 11:42 AM</span>
<span class="t" style="top:369.84px;font-size:12px;letter-spacing:-0.099px;color:#111;left:583.00px;">File folder</span>
<div class="a" style="left:175px;top:391px;width:598px;height:24px;background:#cce8ff;border:1px solid #0878d4;border-radius:1.500px;box-sizing:border-box;"></div>
<svg class="a" style="left:179px;top:396px;" width="16" height="13" viewBox="0 0 16 13"><defs><linearGradient id="fg17" x1="0" y1="0" x2="1" y2="1"><stop offset="0" stop-color="#ffe79c"/><stop offset="1" stop-color="#ffcd45"/></linearGradient></defs>
<path d="M1.300 0H6C6.600 0 7 .2 7.400 .7L8.300 2H14.700C15.400 2 16 2.600 16 3.300V6H0V1.300C0 .6 .6 0 1.300 0Z" fill="#f0a90a"/>
<path d="M0 4.900C0 4.400 .4 4 .9 4H6.200C6.700 4 7 3.900 7.300 3.600L7.500 3.400C7.700 3.250 7.900 3.200 8.200 3.200H15C15.600 3.200 16 3.600 16 4.200V11.800C16 12.500 15.500 13 14.800 13H1.200C.5 13 0 12.500 0 11.800Z" fill="url(#fg17)"/>
<path d="M0 11.500V11.800C0 12.500 .5 13 1.200 13H14.800C15.500 13 16 12.500 16 11.800V11.500C16 12 15.500 12.300 14.800 12.300H1.200C.5 12.300 0 12 0 11.500Z" fill="#eaa81c"/></svg>
<span class="t" style="top:397.84px;font-size:12px;letter-spacing:-0.432px;color:#111;left:199.00px;">c4b6e30584f9125ccab1c549ace88c3d</span>
<span class="t" style="top:397.84px;font-size:12px;letter-spacing:-0.251px;color:#111;left:439.00px;">4/28/2025 7:12 PM</span>
<span class="t" style="top:397.84px;font-size:12px;letter-spacing:-0.099px;color:#111;left:583.00px;">File folder</span>
<div class="a" style="left:175px;top:419px;width:598px;height:24px;background:#cce8ff;border:1px solid #0878d4;border-radius:1.500px;box-sizing:border-box;"></div>
<svg class="a" style="left:179px;top:424px;" width="16" height="13" viewBox="0 0 16 13"><defs><linearGradient id="fg18" x1="0" y1="0" x2="1" y2="1"><stop offset="0" stop-color="#ffe79c"/><stop offset="1" stop-color="#ffcd45"/></linearGradient></defs>
<path d="M1.300 0H6C6.600 0 7 .2 7.400 .7L8.300 2H14.700C15.400 2 16 2.600 16 3.300V6H0V1.300C0 .6 .6 0 1.300 0Z" fill="#f0a90a"/>
<path d="M0 4.900C0 4.400 .4 4 .9 4H6.200C6.700 4 7 3.900 7.300 3.600L7.500 3.400C7.700 3.250 7.900 3.200 8.200 3.200H15C15.600 3.200 16 3.600 16 4.200V11.800C16 12.500 15.500 13 14.800 13H1.200C.5 13 0 12.500 0 11.800Z" fill="url(#fg18)"/>
<path d="M0 11.500V11.800C0 12.500 .5 13 1.200 13H14.800C15.500 13 16 12.500 16 11.800V11.500C16 12 15.500 12.300 14.800 12.300H1.200C.5 12.300 0 12 0 11.500Z" fill="#eaa81c"/></svg>
<span class="t" style="top:425.84px;font-size:12px;letter-spacing:-0.532px;color:#111;left:199.00px;">c8de46dd5395748039d9184a427e25b9</span>
<span class="t" style="top:425.84px;font-size:12px;letter-spacing:-0.281px;color:#111;left:439.00px;">4/14/2025 12:34 PM</span>
<span class="t" style="top:425.84px;font-size:12px;letter-spacing:-0.099px;color:#111;left:583.00px;">File folder</span>
<div class="a" style="left:175px;top:447px;width:598px;height:24px;background:#cce8ff;border:1px solid #0878d4;border-radius:1.500px;box-sizing:border-box;"></div>
<svg class="a" style="left:179px;top:452px;" width="16" height="13" viewBox="0 0 16 13"><defs><linearGradient id="fg19" x1="0" y1="0" x2="1" y2="1"><stop offset="0" stop-color="#ffe79c"/><stop offset="1" stop-color="#ffcd45"/></linearGradient></defs>
<path d="M1.300 0H6C6.600 0 7 .2 7.400 .7L8.300 2H14.700C15.400 2 16 2.600 16 3.300V6H0V1.300C0 .6 .6 0 1.300 0Z" fill="#f0a90a"/>
<path d="M0 4.900C0 4.400 .4 4 .9 4H6.200C6.700 4 7 3.900 7.300 3.600L7.500 3.400C7.700 3.250 7.900 3.200 8.200 3.200H15C15.600 3.200 16 3.600 16 4.200V11.800C16 12.500 15.500 13 14.800 13H1.200C.5 13 0 12.500 0 11.800Z" fill="url(#fg19)"/>
<path d="M0 11.500V11.800C0 12.500 .5 13 1.200 13H14.800C15.500 13 16 12.500 16 11.800V11.500C16 12 15.500 12.300 14.800 12.300H1.200C.5 12.300 0 12 0 11.500Z" fill="#eaa81c"/></svg>
<span class="t" style="top:453.84px;font-size:12px;letter-spacing:-0.158px;color:#111;left:199.00px;">Install</span>
<span class="t" style="top:453.84px;font-size:12px;letter-spacing:-0.251px;color:#111;left:439.00px;">4/28/2025 7:50 PM</span>
<span class="t" style="top:453.84px;font-size:12px;letter-spacing:-0.099px;color:#111;left:583.00px;">File folder</span>
<div class="a" style="left:175px;top:475px;width:598px;height:24px;background:#cce8ff;border:1px solid #0878d4;border-radius:1.500px;box-sizing:border-box;"></div>
<svg class="a" style="left:179px;top:480px;" width="16" height="13" viewBox="0 0 16 13"><defs><linearGradient id="fg20" x1="0" y1="0" x2="1" y2="1"><stop offset="0" stop-color="#ffe79c"/><stop offset="1" stop-color="#ffcd45"/></linearGradient></defs>
<path d="M1.300 0H6C6.600 0 7 .2 7.400 .7L8.300 2H14.700C15.400 2 16 2.600 16 3.300V6H0V1.300C0 .6 .6 0 1.300 0Z" fill="#f0a90a"/>
<path d="M0 4.900C0 4.400 .4 4 .9 4H6.200C6.700 4 7 3.900 7.300 3.600L7.500 3.400C7.700 3.250 7.900 3.200 8.200 3.200H15C15.600 3.200 16 3.600 16 4.200V11.800C16 12.500 15.500 13 14.800 13H1.200C.5 13 0 12.500 0 11.800Z" fill="url(#fg20)"/>
<path d="M0 11.500V11.800C0 12.500 .5 13 1.200 13H14.800C15.500 13 16 12.500 16 11.800V11.500C16 12 15.500 12.300 14.800 12.300H1.200C.5 12.300 0 12 0 11.500Z" fill="#eaa81c"/></svg>
<span class="t" style="top:481.84px;font-size:12px;letter-spacing:-0.430px;color:#111;left:199.00px;">SharedFileCache</span>
<span class="t" style="top:481.84px;font-size:12px;letter-spacing:-0.131px;color:#111;left:439.00px;">4/26/2025 11:37 AM</span>
<span class="t" style="top:481.84px;font-size:12px;letter-spacing:-0.099px;color:#111;left:583.00px;">File folder</span>
<div class="a" style="left:175px;top:503px;width:598px;height:24px;background:#cce8ff;border:1px solid #0878d4;border-radius:1.500px;box-sizing:border-box;"></div>
<svg class="a" style="left:181px;top:507px;" width="12" height="16" viewBox="0 0 12 16"><path d="M1.300 .6H7.400L11.400 4.600V14.700C11.400 15.100 11.100 15.400 10.700 15.400H1.300C.9 15.400 .6 15.100 .6 14.700V1.300C.6 .9 .9 .6 1.300 .6Z" fill="#fdfdfd" stroke="#7d7875" stroke-width="1.200"/><path d="M7.400 .8V3.900C7.400 4.300 7.700 4.600 8.100 4.600H11.200" fill="none" stroke="#7d7875" stroke-width="1.100"/></svg>
<span class="t" style="top:509.84px;font-size:12px;letter-spacing:-0.603px;color:#111;left:199.00px;">29e2e4d156aec4d8b7a5f8c726ca01266274...</span>
<span class="t" style="top:509.84px;font-size:12px;letter-spacing:-0.222px;color:#111;left:439.00px;">4/2/2025 1:22 PM</span>
<span class="t" style="top:509.84px;font-size:12px;letter-spacing:-0.646px;color:#111;left:583.00px;">File</span>
<span class="t" style="top:509.84px;font-size:12px;letter-spacing:-0.910px;color:#111;right:565.91px;">3,598 KB</span>
<div class="a" style="left:175px;top:531px;width:598px;height:24px;background:#cce8ff;border:1px solid #0878d4;border-radius:1.500px;box-sizing:border-box;"></div>
<svg class="a" style="left:181px;top:535px;" width="12" height="16" viewBox="0 0 12 16"><path d="M1.300 .6H7.400L11.400 4.600V14.700C11.400 15.100 11.100 15.400 10.700 15.400H1.300C.9 15.400 .6 15.100 .6 14.700V1.300C.6 .9 .9 .6 1.300 .6Z" fill="#fdfdfd" stroke="#7d7875" stroke-width="1.200"/><path d="M7.400 .8V3.900C7.400 4.300 7.700 4.600 8.100 4.600H11.200" fill="none" stroke="#7d7875" stroke-width="1.100"/></svg>
<span class="t" style="top:537.84px;font-size:12px;letter-spacing:-0.493px;color:#111;left:199.00px;">87aecc934b793e9bb3c5710595048ca7a7c...</span>
<span class="t" style="top:537.84px;font-size:12px;letter-spacing:-0.222px;color:#111;left:439.00px;">4/2/2025 1:22 PM</span>
<span class="t" style="top:537.84px;font-size:12px;letter-spacing:-0.646px;color:#111;left:583.00px;">File</span>
<span class="t" style="top:537.84px;font-size:12px;letter-spacing:-0.831px;color:#111;right:565.83px;">10,954 KB</span>
<div class="a" style="left:175px;top:559px;width:598px;height:24px;background:#cce8ff;border:1px solid #0878d4;border-radius:1.500px;box-sizing:border-box;"></div>
<svg class="a" style="left:181px;top:563px;" width="12" height="16" viewBox="0 0 12 16"><path d="M1.300 .6H7.400L11.400 4.600V14.700C11.400 15.100 11.100 15.400 10.700 15.400H1.300C.9 15.400 .6 15.100 .6 14.700V1.300C.6 .9 .9 .6 1.300 .6Z" fill="#fdfdfd" stroke="#7d7875" stroke-width="1.200"/><path d="M7.400 .8V3.900C7.400 4.300 7.700 4.600 8.100 4.600H11.200" fill="none" stroke="#7d7875" stroke-width="1.100"/></svg>
<span class="t" style="top:565.84px;font-size:12px;letter-spacing:-0.390px;color:#111;left:199.00px;">758a4e52fe9c228fb7ac1b3f50f78d6cf63d8...</span>
<span class="t" style="top:565.84px;font-size:12px;letter-spacing:-0.251px;color:#111;left:439.00px;">4/28/2025 7:34 PM</span>
<span class="t" style="top:565.84px;font-size:12px;letter-spacing:-0.646px;color:#111;left:583.00px;">File</span>
<span class="t" style="top:565.84px;font-size:12px;letter-spacing:-0.910px;color:#111;right:565.91px;">1,594 KB</span>
<div class="a" style="left:175px;top:587px;width:598px;height:24px;background:#cce8ff;border:1px solid #0878d4;border-radius:1.500px;box-sizing:border-box;"></div>
<svg class="a" style="left:181px;top:591px;" width="12" height="16" viewBox="0 0 12 16"><path d="M1.300 .6H7.400L11.400 4.600V14.700C11.400 15.100 11.100 15.400 10.700 15.400H1.300C.9 15.400 .6 15.100 .6 14.700V1.300C.6 .9 .9 .6 1.300 .6Z" fill="#fdfdfd" stroke="#7d7875" stroke-width="1.200"/><path d="M7.400 .8V3.900C7.400 4.300 7.700 4.600 8.100 4.600H11.200" fill="none" stroke="#7d7875" stroke-width="1.100"/></svg>
<span class="t" style="top:593.84px;font-size:12px;letter-spacing:-0.397px;color:#111;left:199.00px;">1148ec829b9e1c9e4adbe4ddbae366c301b...</span>
<span class="t" style="top:593.84px;font-size:12px;letter-spacing:-0.251px;color:#111;left:439.00px;">4/28/2025 7:36 PM</span>
<span class="t" style="top:593.84px;font-size:12px;letter-spacing:-0.646px;color:#111;left:583.00px;">File</span>
<span class="t" style="top:593.84px;font-size:12px;letter-spacing:-0.831px;color:#111;right:565.83px;">18,574 KB</span>
<div class="a" style="left:175px;top:615px;width:598px;height:24px;background:#cce8ff;border:1px solid #0878d4;border-radius:1.500px;box-sizing:border-box;"></div>
<svg class="a" style="left:181px;top:619px;" width="12" height="16" viewBox="0 0 12 16"><path d="M1.300 .6H7.400L11.400 4.600V14.700C11.400 15.100 11.100 15.400 10.700 15.400H1.300C.9 15.400 .6 15.100 .6 14.700V1.300C.6 .9 .9 .6 1.300 .6Z" fill="#fdfdfd" stroke="#7d7875" stroke-width="1.200"/><path d="M7.400 .8V3.900C7.400 4.300 7.700 4.600 8.100 4.600H11.200" fill="none" stroke="#7d7875" stroke-width="1.100"/></svg>
<span class="t" style="top:621.84px;font-size:12px;letter-spacing:-0.395px;color:#111;left:199.00px;">fb6d4e5152d96c81a46effcc6eb063b438b6...</span>
<span class="t" style="top:621.84px;font-size:12px;letter-spacing:-0.251px;color:#111;left:439.00px;">4/13/2025 6:49 PM</span>
<span class="t" style="top:621.84px;font-size:12px;letter-spacing:-0.646px;color:#111;left:583.00px;">File</span>
<span class="t" style="top:621.84px;font-size:12px;letter-spacing:-0.831px;color:#111;right:565.83px;">14,327 KB</span>
<svg class="a" style="left:990px;top:270px;" width="110" height="110" viewBox="0 0 110 110"><defs>
<linearGradient id="hh" x1="0" y1="0" x2="0" y2="1"><stop offset="0" stop-color="#4a4a4a"/><stop offset=".3" stop-color="#1c1c1c"/><stop offset="1" stop-color="#0a0a0a"/></linearGradient>
<linearGradient id="hn" x1="0" y1="0" x2="0" y2="1"><stop offset="0" stop-color="#3c3c3c"/><stop offset=".3" stop-color="#a8a8a8"/><stop offset=".6" stop-color="#dcdcdc"/><stop offset="1" stop-color="#8a8a8a"/></linearGradient>
<linearGradient id="hd" x1=".2" y1="0" x2=".8" y2="1"><stop offset="0" stop-color="#e8e8e8"/><stop offset=".4" stop-color="#c2c2c2"/><stop offset="1" stop-color="#7c7c7c"/></linearGradient>
<linearGradient id="hf" x1="0" y1="0" x2="0" y2="1"><stop offset="0" stop-color="#707070"/><stop offset=".35" stop-color="#ececec"/><stop offset=".7" stop-color="#9a9a9a"/><stop offset="1" stop-color="#585858"/></linearGradient>
<radialGradient id="hs" cx=".5" cy=".5" r=".5"><stop offset="0" stop-color="#000" stop-opacity=".35"/><stop offset="1" stop-color="#000" stop-opacity="0"/></radialGradient>
</defs>
<g transform="translate(40 84) rotate(-18)"><ellipse cx="0" cy="0" rx="17" ry="2.600" fill="url(#hs)"/></g>
<path d="M46.400 13.100C50 10.500 54 9.800 58 10.100C64 10.600 68.500 13 72 15.900C76 19 78.500 21.500 80.500 23.400L86 30L83.700 36L80.500 39.700C78 40 76.500 40.300 74.900 40.700C72.500 41.300 71 42 69.300 43L67.400 43.900L55.200 56.100L47.800 47.700L59 37.400C61 35.500 62.500 32 63.200 28C63.500 25.500 63 24 61.800 22.400C60.500 20.500 58.500 18.800 56.200 17.800C53 16.500 50 15.800 47.300 15.400C46 14.800 46 13.800 46.400 13.100Z" fill="url(#hd)"/>
<path d="M50.500 12C56 10.700 63 11.700 70 16.400C76 20.700 81 25.700 84.800 30.400" stroke="#3a3a3a" stroke-width="2.200" fill="none" opacity=".8"/>
<path d="M47.500 13.300C52 11.200 57 10.800 61 11.600" stroke="#fafafa" stroke-width="1" fill="none" opacity=".9"/>
<path d="M47 14C47.800 13.200 48.500 13.500 48 14.600" stroke="#333" stroke-width="1" fill="none"/>
<g transform="translate(18.500 83) rotate(-44)">
<rect x="46" y="-4.800" width="14" height="9.600" fill="url(#hn)"/>
<rect x="-3.500" y="-6.100" width="52.300" height="12.200" rx="3.200" fill="url(#hh)"/>
</g>
<g transform="translate(82.600 37.600) rotate(48)">
<rect x="-2" y="-3.200" width="8" height="6.400" fill="url(#hf)"/>
<rect x="4.500" y="-7" width="10.500" height="14" rx="3.200" fill="url(#hf)"/>
<path d="M8.500 -6.700V6.700" stroke="#5a5a5a" stroke-width=".8" opacity=".7"/>
</g></svg>
<span class="t" style="top:364.11px;font-size:10.5px;letter-spacing:0.883px;color:#6d7883;-webkit-text-stroke:0.25px #8a949e;left:992.60px;">KAPILARYA.COM</span>
</div></body></html>
